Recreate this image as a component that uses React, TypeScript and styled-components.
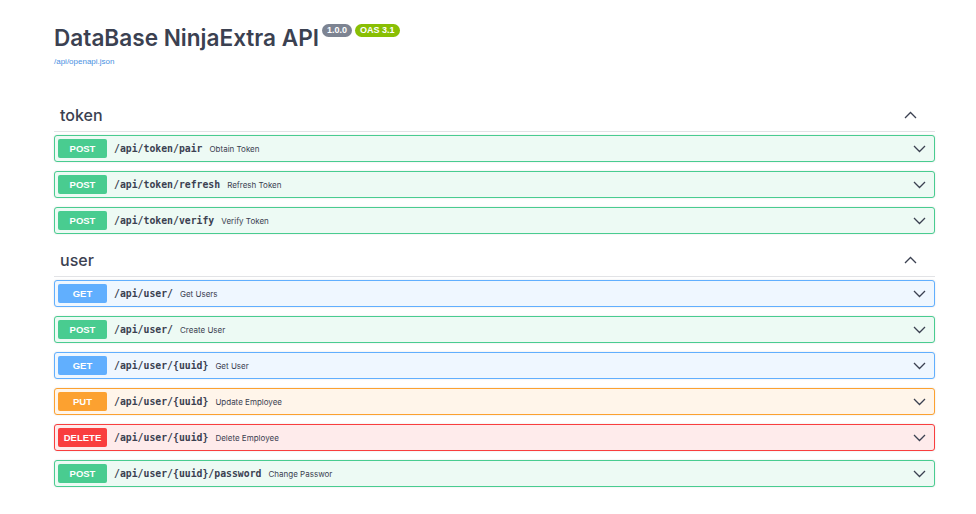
import styled, { createGlobalStyle } from "styled-components";

const Global = createGlobalStyle`
  html, body {
    margin: 0;
    padding: 0;
    background: #fff;
  }
  body {
    font-family: Inter, "Noto Sans", "Liberation Sans", sans-serif;
    color: #3b4151;
  }
`

type Method = "GET" | "POST" | "PUT" | "DELETE";

const colors: Record<Method, { main: string; bg: string }> = {
  GET: { main: "#61affe", bg: "#eff7ff" },
  POST: { main: "#49cc90", bg: "#edfaf4" },
  PUT: { main: "#fca130", bg: "#fff5ea" },
  DELETE: { main: "#f93e3e", bg: "#feebeb" },
};

interface Op {
  method: Method;
  path: string;
  summary: string;
}

const sections: { tag: string; ops: Op[] }[] = [
  {
    tag: "token",
    ops: [
      { method: "POST", path: "/api/token/pair", summary: "Obtain Token" },
      { method: "POST", path: "/api/token/refresh", summary: "Refresh Token" },
      { method: "POST", path: "/api/token/verify", summary: "Verify Token" },
    ],
  },
  {
    tag: "user",
    ops: [
      { method: "GET", path: "/api/user/", summary: "Get Users" },
      { method: "POST", path: "/api/user/", summary: "Create User" },
      { method: "GET", path: "/api/user/{uuid}", summary: "Get User" },
      { method: "PUT", path: "/api/user/{uuid}", summary: "Update Employee" },
      { method: "DELETE", path: "/api/user/{uuid}", summary: "Delete Employee" },
      { method: "POST", path: "/api/user/{uuid}/password", summary: "Change Passwor" },
    ],
  },
];

function Chevron({ up }: { up?: boolean }) {
  return (
    <svg width="13" height="8" viewBox="0 0 13 8" fill="none">
      <path
        d={up ? "M1 7 L6.5 1.5 L12 7" : "M1 1 L6.5 6.5 L12 1"}
        stroke="#3b4151"
        strokeWidth="1.3"
      />
    </svg>
  );
}

export default function App() {
  return (
    <Page>
      <Global />
      <Info>
        <TitleRow>
          <Title>DataBase NinjaExtra API</Title>
          <Pill color="#7d8492">1.0.0</Pill>
          <Pill color="#89bf04">OAS 3.1</Pill>
        </TitleRow>
        <SpecLink>/api/openapi.json</SpecLink>
      </Info>
      {sections.map((s) => (
        <Section key={s.tag}>
          <TagHeader>
            <TagName>{s.tag}</TagName>
            <TagToggle>
              <Chevron up />
            </TagToggle>
          </TagHeader>
          <OpList>
            {s.ops.map((op, i) => (
              <OpRow key={i} main={colors[op.method].main} bg={colors[op.method].bg}>
                <MethodBadge main={colors[op.method].main}>{op.method}</MethodBadge>
                <Path>{op.path}</Path>
                <Summary>{op.summary}</Summary>
                <RowToggle>
                  <Chevron />
                </RowToggle>
              </OpRow>
            ))}
          </OpList>
        </Section>
      ))}
    </Page>
  );
}

const Page = styled.div`
  width: 881px;
  margin-left: 54px;
  padding-top: 25px;
`
const Info = styled.div`
  height: 73px;
`
const TitleRow = styled.div`
  display: flex;
  align-items: flex-start;
`
const Title = styled.h2`
  margin: 0;
  font-size: 22.6px;
  font-weight: 600;
  line-height: 26px;
  color: #3b4151;
`
const Pill = styled.span<{ color: string }>`
  margin-left: 3px;
  margin-top: -1px;
  padding: 0 5px;
  height: 13px;
  line-height: 13px;
  border-radius: 7px;
  background: ${(p) => p.color};
  color: #fff;
  font-size: 9px;
  font-weight: 600;
  font-family: "Liberation Sans", Arial, sans-serif;
`
const SpecLink = styled.div`
  margin-top: 6px;
  font-size: 8px;
  color: #4990e2;
  font-family: "Liberation Sans", Arial, sans-serif;
`
const Section = styled.div``
const TagHeader = styled.div`
  display: flex;
  align-items: center;
  height: 33px;
  border-bottom: 1px solid #e2e3e6;
  padding: 0 18px 0 6px;
`
const TagName = styled.span`
  flex: 1;
  font-size: 16px;
  font-weight: 500;
  color: #3b4151;
`
const TagToggle = styled.span`
  display: flex;
  align-items: center;
`
const OpList = styled.div`
  padding-top: 3px;
`
const OpRow = styled.div<{ main: string; bg: string }>`
  display: flex;
  align-items: center;
  height: 25px;
  padding: 0 6px 0 3px;
  margin-bottom: 9px;
  border: 1px solid ${(p) => p.main};
  border-radius: 3px;
  background: ${(p) => p.bg};
  box-shadow: 0 0 2px rgba(0, 0, 0, 0.12);
`
const MethodBadge = styled.span<{ main: string }>`
  width: 49px;
  height: 19px;
  line-height: 19px;
  text-align: center;
  border-radius: 2px;
  background: ${(p) => p.main};
  color: #fff;
  font-size: 9.5px;
  font-weight: 700;
  font-family: "Liberation Sans", Arial, sans-serif;
`
const Path = styled.span`
  margin-left: 7px;
  font-family: "DejaVu Sans Mono", monospace;
  font-weight: 700;
  font-size: 9.8px;
  color: #3b4151;
`
const Summary = styled.span`
  flex: 1;
  margin-left: 7px;
  font-size: 8px;
  color: #3b4151;
`
const RowToggle = styled.span`
  display: flex;
  align-items: center;
  margin-right: 2px;
`
